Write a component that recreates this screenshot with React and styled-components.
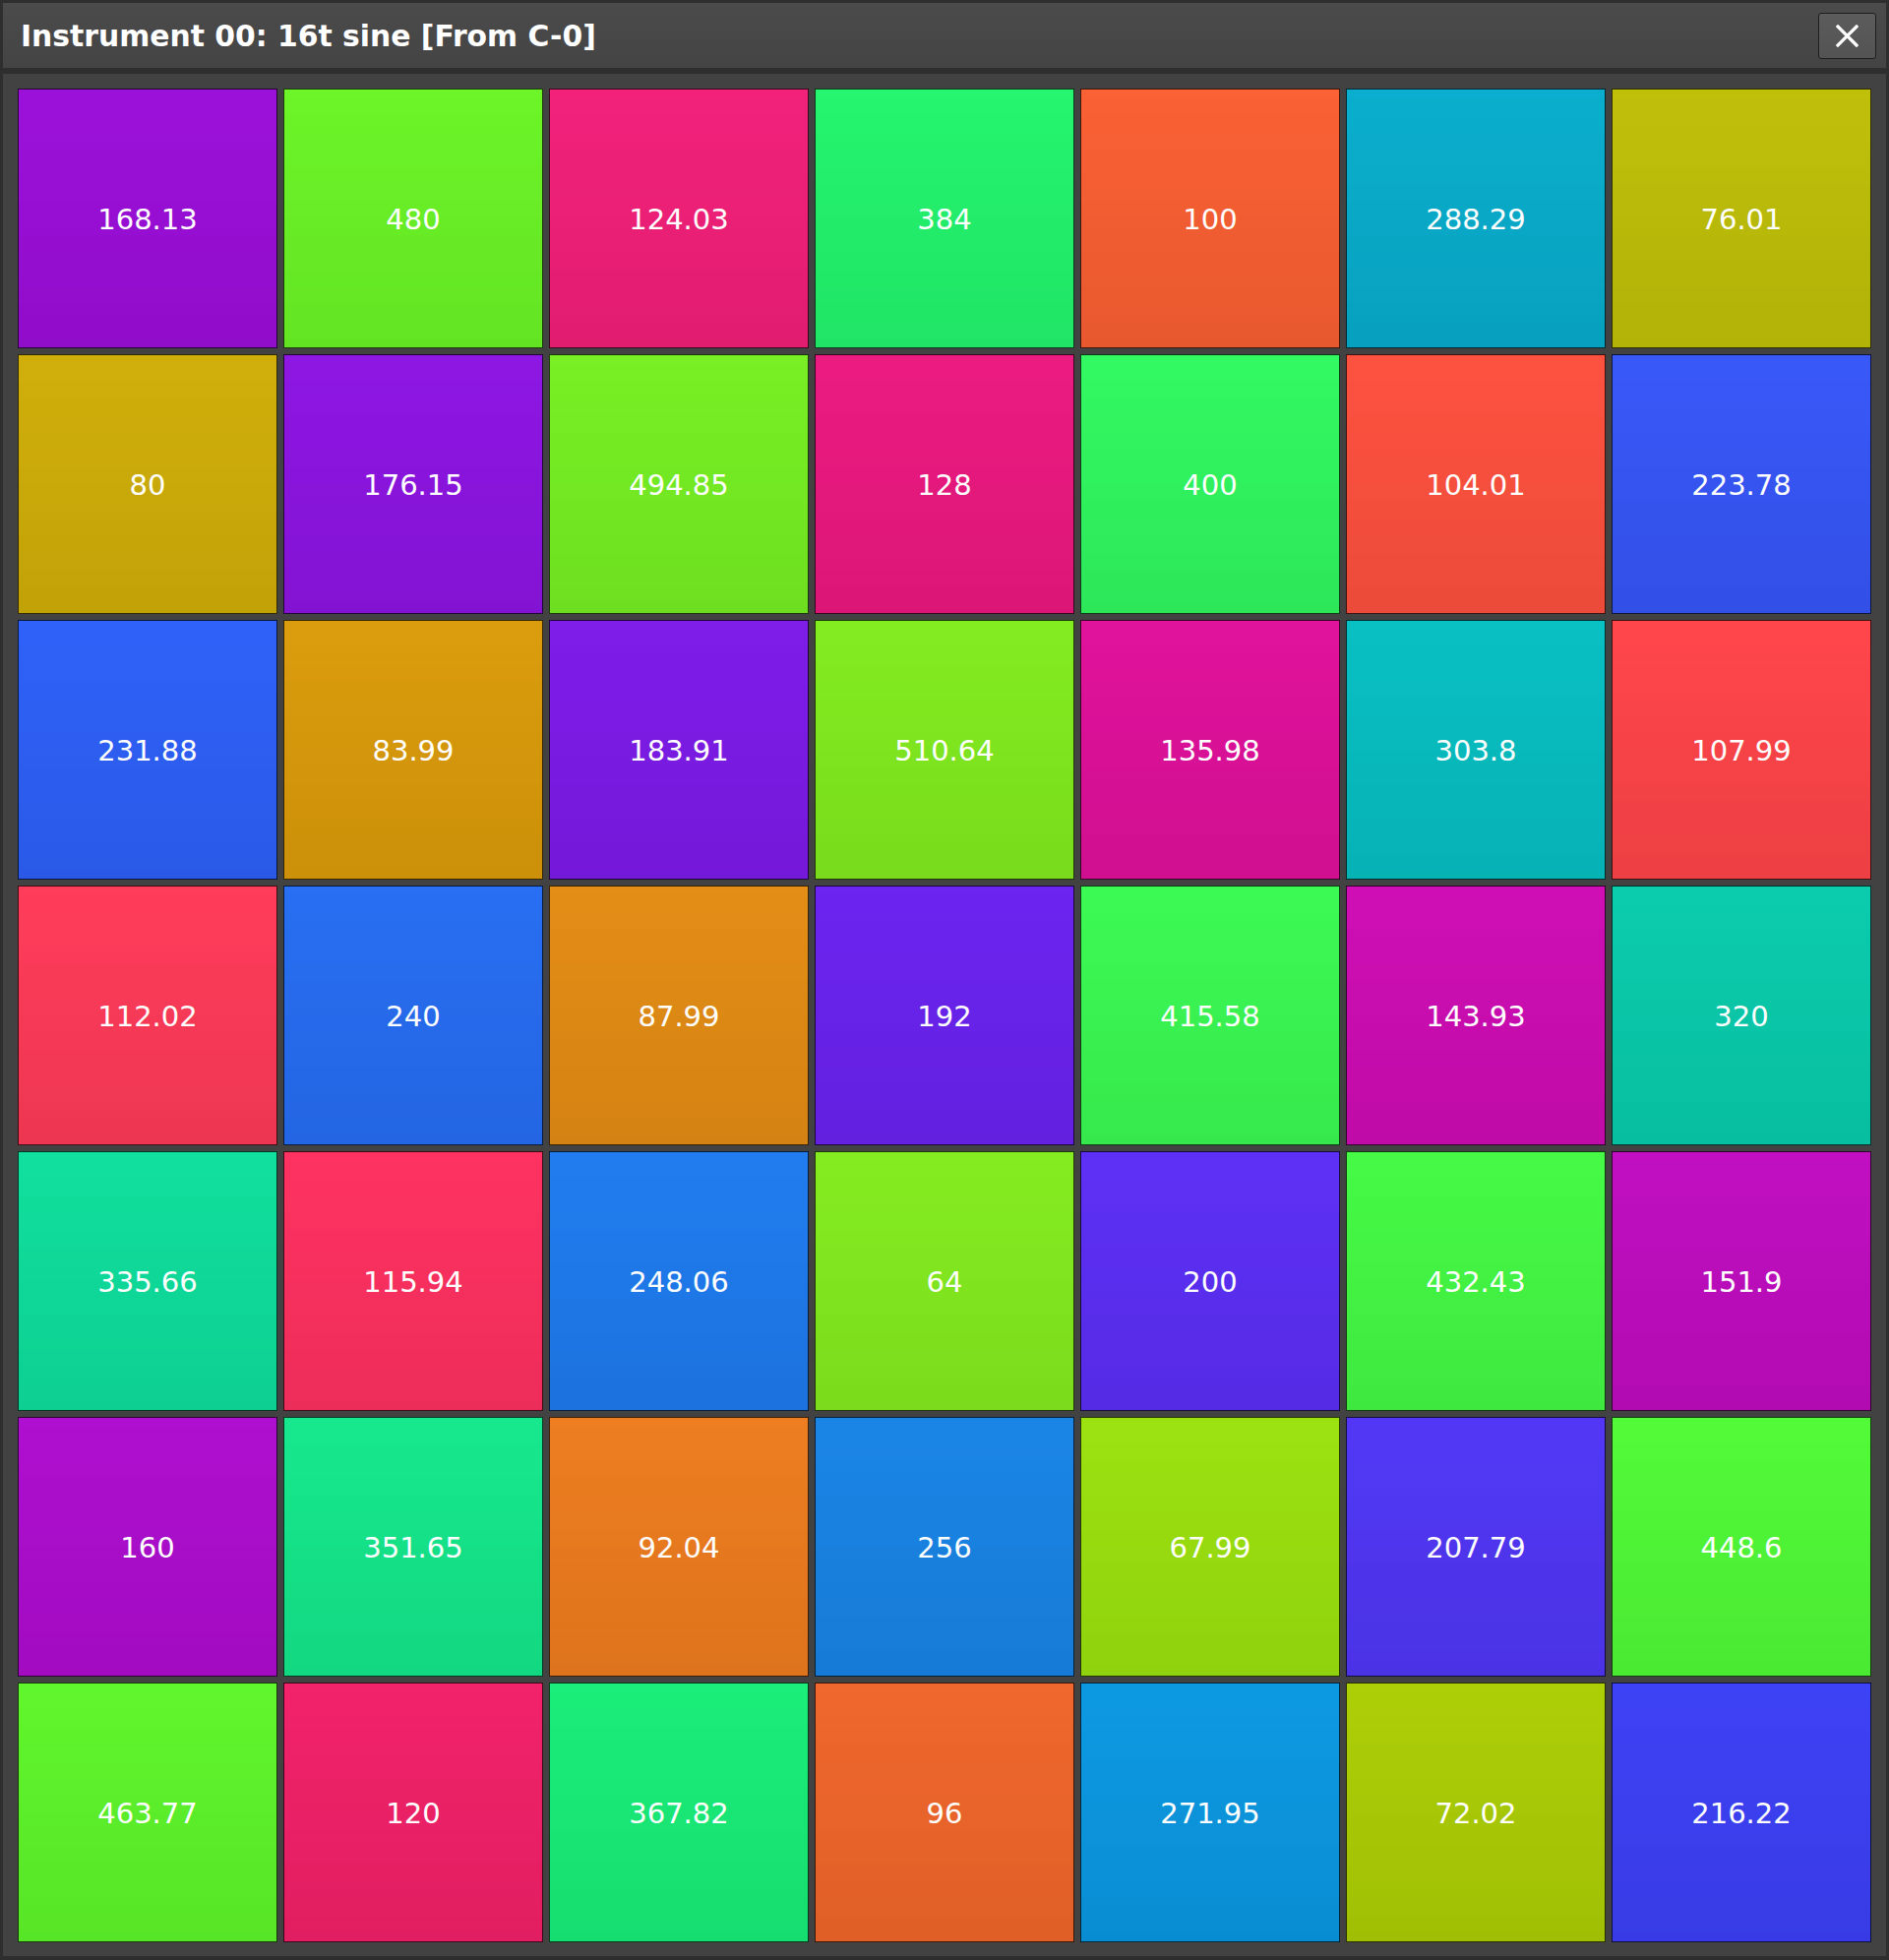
import styled, { createGlobalStyle } from "styled-components"

const GlobalStyle = createGlobalStyle`
  html, body {
    margin: 0;
    padding: 0;
    background: #2e2e2e;
  }
  * {
    box-sizing: border-box;
  }
`

// frequency -> swatch colour, read row by row
const cells = [
  ["168.13", "#9b0ed9"], ["480", "#6bf526"], ["124.03", "#f21f79"], ["384", "#22f56d"], ["100", "#fa5f32"], ["288.29", "#08adcd"], ["76.01", "#bfbf08"],
  ["80", "#d0ae08"], ["176.15", "#8d14e3"], ["494.85", "#76f022"], ["128", "#ec1880"], ["400", "#30f960"], ["104.01", "#fe503e"], ["223.78", "#3656f8"],
  ["231.88", "#2d60f9"], ["83.99", "#db9b0a"], ["183.91", "#7d1ae9"], ["510.64", "#82ec1e"], ["135.98", "#e0109b"], ["303.8", "#06bfc2"], ["107.99", "#ff4449"],
  ["112.02", "#ff3a58"], ["240", "#266df3"], ["87.99", "#e48c14"], ["192", "#6a22f0"], ["415.58", "#3afa52"], ["143.93", "#ce0cb4"], ["320", "#08ccac"],
  ["335.66", "#0edf9c"], ["115.94", "#ff3060"], ["248.06", "#1e7bef"], ["64", "#84ec1e"], ["200", "#5c2ef6"], ["432.43", "#44fa44"], ["151.9", "#c00cc0"],
  ["160", "#ae0ccf"], ["351.65", "#14e88c"], ["92.04", "#ee7c1e"], ["256", "#1884e6"], ["67.99", "#9be20e"], ["207.79", "#5036f6"], ["448.6", "#50fb36"],
  ["463.77", "#5ef62a"], ["120", "#f22068"], ["367.82", "#18ee78"], ["96", "#f0662a"], ["271.95", "#0a98e2"], ["72.02", "#acce04"], ["216.22", "#3c40f6"],
]

export default function App() {
  return (
    <>
      <GlobalStyle />
      <Window>
        <TitleBar>
          <Title>Instrument 00: 16t sine [From C-0]</Title>
          <CloseBtn>
            <svg width="23" height="23" viewBox="0 0 23 23">
              <path d="M2 2 L21 21 M21 2 L2 21" stroke="#fff" strokeWidth="3.2" strokeLinecap="square" />
            </svg>
          </CloseBtn>
        </TitleBar>
        <Panel>
          {cells.map(([label, color], i) => (
            <Cell key={i} $color={color}>{label}</Cell>
          ))}
        </Panel>
      </Window>
    </>
  )
}

const Window = styled.div`
  width: 1920px;
  height: 1992px;
  padding: 3px 3px 4px 3px;
  display: flex;
  flex-direction: column;
  gap: 6px;
  background: #2e2e2e;
`

const TitleBar = styled.div`
  height: 66px;
  flex: none;
  display: flex;
  align-items: center;
  justify-content: space-between;
  padding: 0 10px 0 18px;
  background: linear-gradient(#4b4b4b, #444444);
`

const Title = styled.div`
  font-family: "DejaVu Sans", "Liberation Sans", sans-serif;
  font-weight: bold;
  font-size: 29.8px;
  color: #ffffff;
  padding-top: 1px;
`

const CloseBtn = styled.div`
  width: 59px;
  height: 47px;
  display: flex;
  align-items: center;
  justify-content: center;
  border: 1px solid #1e1e1e;
  border-radius: 3px;
  background: linear-gradient(#5c5c5c, #535353);
`

const Panel = styled.div`
  flex: 1;
  background: #424242;
  padding: 15px 15px 14px 15px;
  display: grid;
  grid-template-columns: repeat(7, 264px);
  grid-auto-rows: 264px;
  gap: 6px;
`

const Cell = styled.div`
  display: flex;
  align-items: center;
  justify-content: center;
  padding-top: 2px;
  border: 1px solid rgba(0, 0, 0, 0.75);
  background-color: ${(p) => p.$color};
  background-image: linear-gradient(rgba(255, 255, 255, 0.01), rgba(0, 0, 0, 0.07));
  font-family: "DejaVu Sans", "Liberation Sans", sans-serif;
  font-size: 29px;
  color: #ffffff;
`
